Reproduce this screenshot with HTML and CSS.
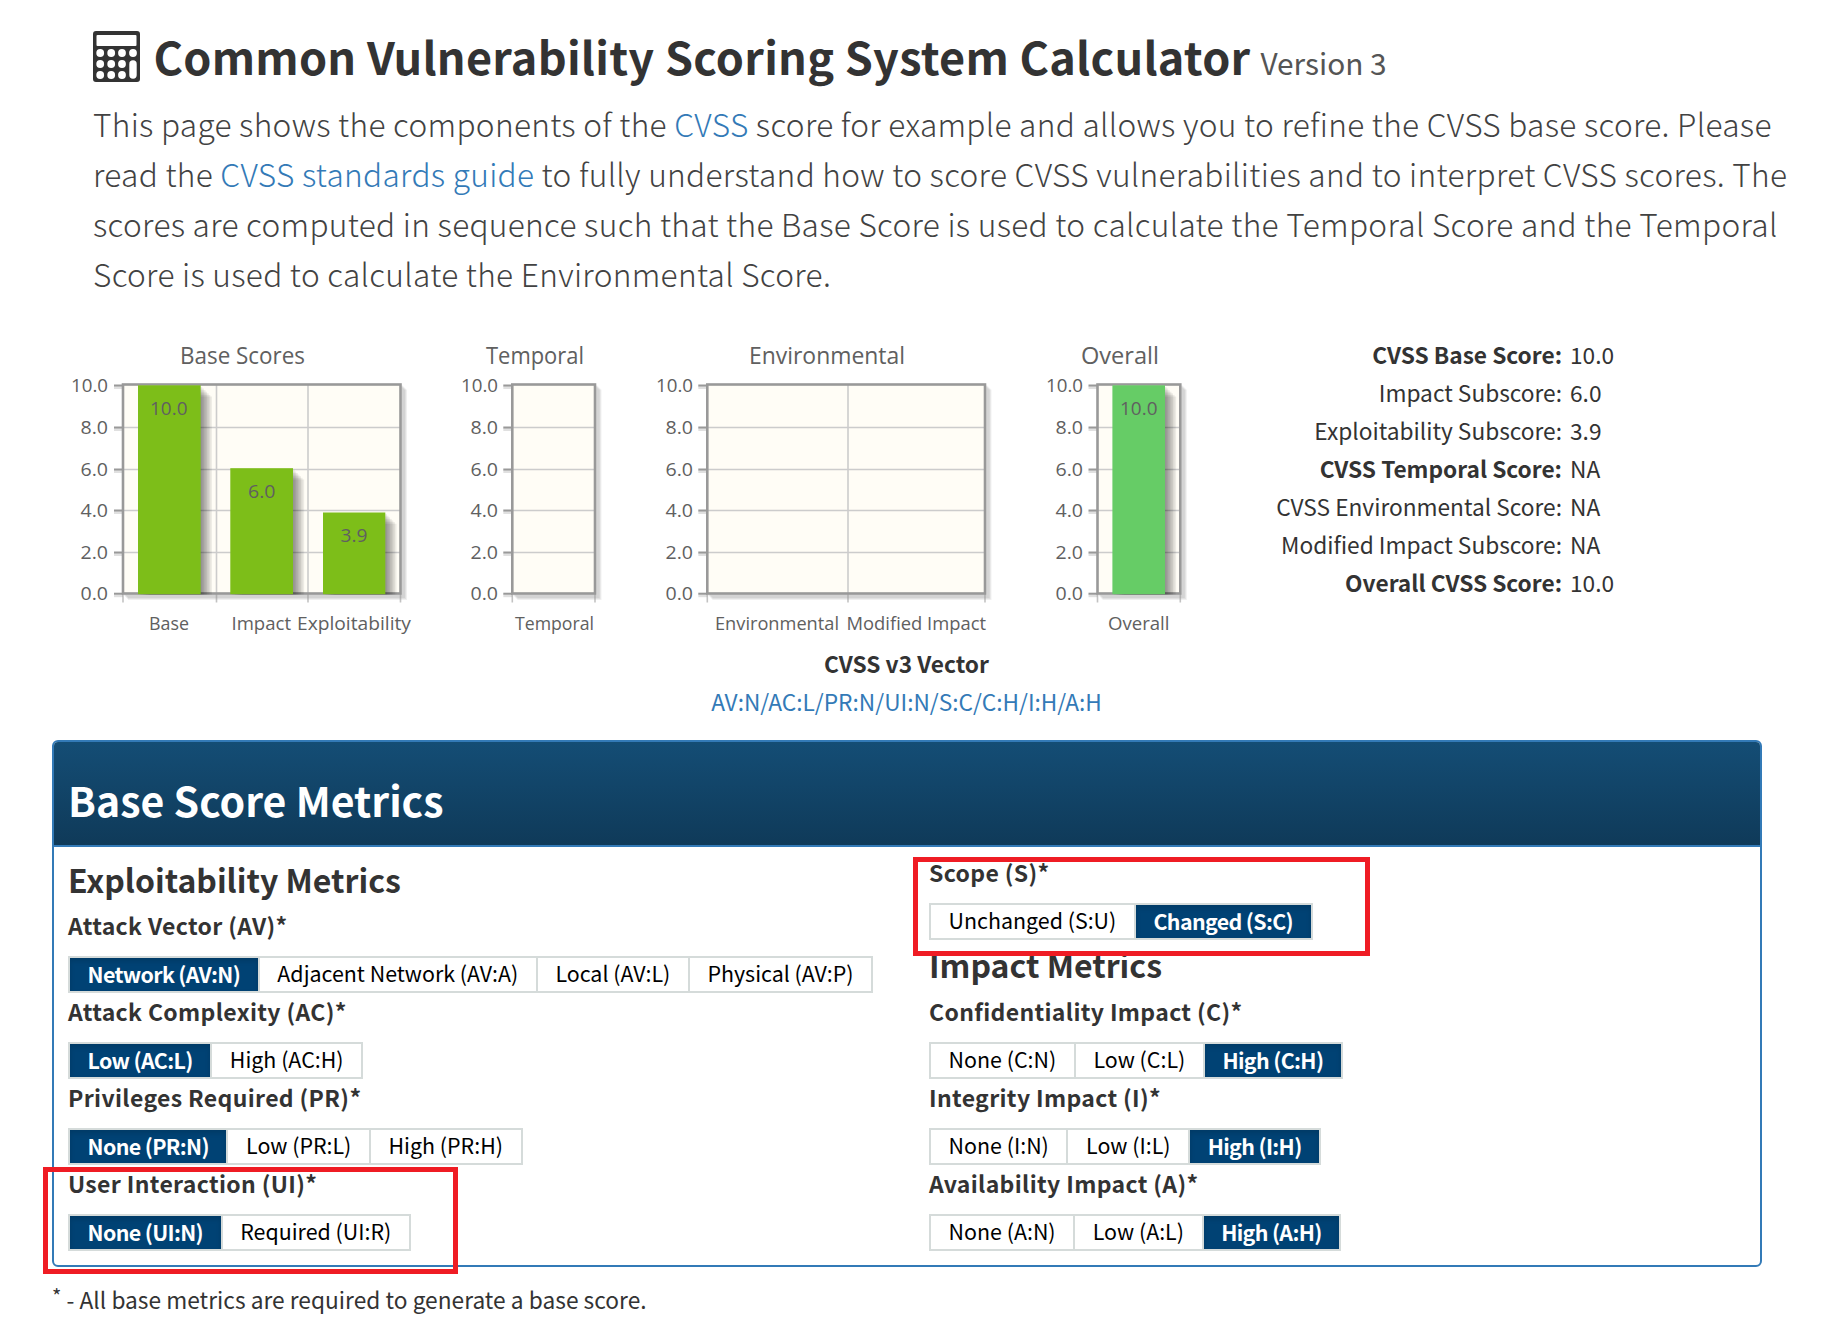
FILE: index.html
```html
<!DOCTYPE html>
<html lang="en">
<head>
<meta charset="utf-8">
<title>Common Vulnerability Scoring System Calculator</title>
<link rel="stylesheet" href="styles.css">
</head>
<body>
<header class="intro">
  <h1 class="title">
    <svg class="calc" viewBox="0 0 47 51" width="47" height="51" aria-hidden="true">
      <path fill="#333" fill-rule="evenodd" d="M3 0H44Q47 0 47 3V48Q47 51 44 51H3Q0 51 0 48V3Q0 0 3 0ZM4.500 4Q3.500 4 3.500 5V14Q3.500 15 4.500 15H42.500Q43.500 15 43.500 14V5Q43.500 4 42.500 4Z"/>
      <g fill="#fff"><circle cx="7.200" cy="22" r="3.900"/><circle cx="18.200" cy="22" r="3.900"/><circle cx="29" cy="22" r="3.900"/><circle cx="40" cy="22" r="3.900"/><circle cx="7.200" cy="33" r="3.900"/><circle cx="18.200" cy="33" r="3.900"/><circle cx="29" cy="33" r="3.900"/><circle cx="7.200" cy="44" r="3.900"/><circle cx="18.200" cy="44" r="3.900"/><circle cx="29" cy="44" r="3.900"/><rect x="36.300" y="29.200" width="7.400" height="18.600" rx="3.700"/></g>
    </svg>
    <span class="title-text">Common Vulnerability Scoring System Calculator</span>
    <small class="version">Version 3</small>
  </h1>
  <p class="lead">This page shows the components of the <a href="#">CVSS</a> score for example and allows you to refine the CVSS base score. Please<br>read the <a href="#">CVSS standards guide</a> to fully understand how to score CVSS vulnerabilities and to interpret CVSS scores. The<br>scores are computed in sequence such that the Base Score is used to calculate the Temporal Score and the Temporal<br>Score is used to calculate the Environmental Score.</p>
</header>

<section class="scores">
  <svg class="chart" id="chart-base" width="380" height="314" viewBox="50 330 380 314"></svg>
  <svg class="chart" id="chart-temporal" width="210" height="314" viewBox="430 330 210 314"></svg>
  <svg class="chart" id="chart-env" width="390" height="314" viewBox="640 330 390 314"></svg>
  <svg class="chart" id="chart-overall" width="200" height="314" viewBox="1030 330 200 314"></svg>
  <dl class="score-list">
    <dt class="strong">CVSS Base Score:</dt><dd>10.0</dd>
    <dt>Impact Subscore:</dt><dd>6.0</dd>
    <dt>Exploitability Subscore:</dt><dd>3.9</dd>
    <dt class="strong">CVSS Temporal Score:</dt><dd>NA</dd>
    <dt>CVSS Environmental Score:</dt><dd>NA</dd>
    <dt>Modified Impact Subscore:</dt><dd>NA</dd>
    <dt class="strong">Overall CVSS Score:</dt><dd>10.0</dd>
  </dl>
</section>

<div class="vector">
  <strong>CVSS v3 Vector</strong>
  <a href="#">AV:N/AC:L/PR:N/UI:N/S:C/C:H/I:H/A:H</a>
</div>

<section class="panel">
  <div class="panel-head"><h2>Base Score Metrics</h2></div>
  <div class="panel-body">
    <div class="col col-left">
      <h3>Exploitability Metrics</h3>
      <div class="metric">
        <h4>Attack Vector (AV)*</h4>
        <div class="group"><button class="on">Network (AV:N)</button><button>Adjacent Network (AV:A)</button><button>Local (AV:L)</button><button>Physical (AV:P)</button></div>
      </div>
      <div class="metric">
        <h4>Attack Complexity (AC)*</h4>
        <div class="group"><button class="on">Low (AC:L)</button><button>High (AC:H)</button></div>
      </div>
      <div class="metric">
        <h4>Privileges Required (PR)*</h4>
        <div class="group"><button class="on">None (PR:N)</button><button>Low (PR:L)</button><button>High (PR:H)</button></div>
      </div>
      <div class="metric">
        <h4>User Interaction (UI)*</h4>
        <div class="group"><button class="on">None (UI:N)</button><button>Required (UI:R)</button></div>
        <span class="mark mark-ui"></span>
      </div>
    </div>
    <div class="col col-right">
      <div class="metric">
        <h4>Scope (S)*</h4>
        <div class="group"><button>Unchanged (S:U)</button><button class="on">Changed (S:C)</button></div>
        <span class="mark mark-scope"></span>
      </div>
      <h3>Impact Metrics</h3>
      <div class="metric">
        <h4>Confidentiality Impact (C)*</h4>
        <div class="group"><button>None (C:N)</button><button>Low (C:L)</button><button class="on">High (C:H)</button></div>
      </div>
      <div class="metric">
        <h4>Integrity Impact (I)*</h4>
        <div class="group"><button>None (I:N)</button><button>Low (I:L)</button><button class="on">High (I:H)</button></div>
      </div>
      <div class="metric">
        <h4>Availability Impact (A)*</h4>
        <div class="group"><button>None (A:N)</button><button>Low (A:L)</button><button class="on">High (A:H)</button></div>
      </div>
    </div>
  </div>
</section>
<p class="footnote"><sup>*</sup> - All base metrics are required to generate a base score.</p>
<script src="charts.js"></script>
</body>
</html>
```
FILE: styles.css
```css
* { box-sizing: border-box; }
body {
  margin: 0;
  background: #fff;
  color: #333;
  font-family: "Noto Sans CJK SC", "Noto Sans", sans-serif;
  font-size: 22.7px;
  line-height: 38px;
}
h1, h2, h3, h4, p, dl, dd { margin: 0; }
a { color: #337ab7; text-decoration: none; }

.intro { padding: 25px 0 0 92px; height: 330px; white-space: nowrap; }
.title { display: flex; align-items: baseline; height: 73px; font-size: 45px; line-height: 62px; font-weight: 700; }
.title-text { letter-spacing: .25px; }
.calc { align-self: flex-start; margin: 6px 14px 0 .5px; }
.version { margin-left: 10px; font-size: 29.8px; font-weight: 400; color: #555; }
.lead { font-size: 31.6px; line-height: 50px; font-weight: 300; padding-left: 1px; letter-spacing: .31px; color: #424242; }

.scores { display: flex; height: 314px; padding-left: 50px; }
.chart { flex: none; overflow: visible; }
.chart text { font-family: "Open Sans", "Noto Sans", sans-serif; fill: #606060; font-size: 19px; }
.chart .chart-title { font-size: 23px; }
.score-list { display: grid; grid-template-columns: 332px auto; column-gap: 8px; align-content: start; grid-auto-rows: 38px; padding-top: 6px; }
.score-list dt { text-align: right; white-space: nowrap; }
.strong { font-weight: 700; }

.vector { display: flex; flex-direction: column; align-items: center; width: 1813px; height: 96px; padding-top: 1px; }

.panel { margin-left: 52px; width: 1710px; border: 2px solid #337ab7; border-radius: 6px; }
.panel-head { height: 105px; padding: 32px 0 0 14px; border-bottom: 2px solid #337ab7; border-radius: 4px 4px 0 0; background: linear-gradient(#144d75, #0f3a59); color: #fff; }
h2 { font-size: 41px; line-height: 50px; }
.panel-body { display: flex; height: 418px; padding-left: 14px; }
.col-left { width: 861px; padding-top: 12px; }
.col-right { padding-top: 7px; }
h3 { font-size: 32px; line-height: 40px; margin-bottom: 8px; }
h4 { font-size: 23px; line-height: 37px; margin-bottom: 12px; letter-spacing: .35px; white-space: nowrap; }
.metric { position: relative; height: 86px; }
.col-right h3 { margin: 4px 0 9px; }
.group { display: inline-flex; height: 37px; padding: 2px; gap: 2px; background: #d5dbda; vertical-align: top; }
button { border: 0; margin: 0; padding: 0 17.6px; height: 33px; background: #fff; color: #000; font: inherit; font-size: 21.4px; line-height: 29px; white-space: nowrap; display: flex; align-items: flex-start; }
button.on { background: #004274; color: #fff; font-weight: 700; letter-spacing: -.65px; line-height: 31px; box-shadow: inset 0 3px 5px rgba(0, 0, 0, .125); }
.mark { position: absolute; z-index: 2; border: 5px solid #ef1c24; pointer-events: none; }
.mark-ui { left: -25px; top: 2px; width: 415px; height: 107px; }
.mark-scope { left: -16px; top: 3px; width: 457px; height: 99px; }
.footnote { padding: 14px 0 0 52px; letter-spacing: .03px; }
.footnote sup { font-size: 20px; line-height: 0; vertical-align: 5px; }
```
FILE: charts.js
```javascript
const NS = "http://www.w3.org/2000/svg";
const TOP = 384.5, BOTTOM = 593.5;
const ROWS = [385.5, 427.5, 469.5, 510.5, 552.5, 593.7];

function add(parent, tag, attrs, text) {
  const el = document.createElementNS(NS, tag);
  for (const k in attrs) el.setAttribute(k, attrs[k]);
  if (text) el.textContent = text;
  parent.appendChild(el);
  return el;
}
function label(svg, text, x1, x2, y, cls) {
  add(svg, "text", { x: x1, y: y, textLength: x2 - x1, lengthAdjust: "spacingAndGlyphs", class: cls || "" }, text);
}
function chart(id, c) {
  const svg = document.getElementById(id);
  const w = c.right - c.left, h = BOTTOM - TOP;
  label(svg, c.title[0], c.title[1], c.title[2], 363.5, "chart-title");
  for (let i = 5; i >= 1; i--)
    add(svg, "path", { d: `M${c.right + i} ${TOP + i}V${BOTTOM + i}H${c.left + i}`, fill: "none", stroke: "#000", "stroke-opacity": 0.06, "stroke-width": 3 });
  ROWS.forEach((y, i) => {
    add(svg, "path", { d: `M${c.left - 9} ${y + 2}h9`, stroke: "#000", "stroke-opacity": 0.12, "stroke-width": 3 });
    add(svg, "path", { d: `M${c.left - 9} ${y}h9`, stroke: "#999", "stroke-width": 2 });
    const t = (10 - i * 2).toFixed(1);
    const len = t.length > 3 ? 37 : 27.5;
    label(svg, t, c.axis - len, c.axis, y + 6.4);
  });
  add(svg, "rect", { x: c.left, y: TOP, width: w, height: h, fill: "#fffdf6" });
  ROWS.slice(1, 5).forEach(y => add(svg, "path", { d: `M${c.left} ${y}h${w}`, stroke: "#ccc", "stroke-width": 1.6 }));
  c.grid.forEach(x => add(svg, "path", { d: `M${x} ${TOP}v${h}`, stroke: "#ccc", "stroke-width": 1.6 }));
  [c.left, ...c.grid, c.right].forEach(x => add(svg, "path", { d: `M${x} ${BOTTOM}v9`, stroke: "#999", "stroke-opacity": 0.6, "stroke-width": 1.6 }));
  add(svg, "rect", { x: c.left, y: TOP, width: w, height: h, fill: "none", stroke: "#999", "stroke-width": 2.6 });
  const clip = add(svg, "clipPath", { id: id + "-clip" });
  add(clip, "rect", { x: c.left, y: TOP, width: w + 1, height: h + 1 });
  c.bars.forEach(b => {
    const g = add(svg, "g", { "clip-path": `url(#${id}-clip)` });
    for (let i = 7; i >= 1; i--)
      add(g, "rect", { x: b.x1 + i * 1.6, y: b.top + i * 1.6, width: b.x2 - b.x1, height: 230, fill: "#000", "fill-opacity": 0.07 });
    add(svg, "rect", { x: b.x1, y: b.top, width: b.x2 - b.x1, height: 594.2 - b.top, fill: c.color });
    label(svg, b.text[0], b.text[1], b.text[2], b.text[3]);
  });
  c.names.forEach(n => label(svg, n[0], n[1], n[2], 630));
}

chart("chart-base", {
  title: ["Base Scores", 180, 305], left: 123, right: 400.5, axis: 108, grid: [216.5, 308], color: "#7dbe19",
  bars: [
    { x1: 138, x2: 200.7, top: 385.3, text: ["10.0", 150, 187.5, 414.7] },
    { x1: 230.3, x2: 293, top: 468.2, text: ["6.0", 248, 275.5, 497.7] },
    { x1: 323, x2: 385.3, top: 512.5, text: ["3.9", 340.5, 367.5, 541.7] }
  ],
  names: [["Base", 149, 189], ["Impact", 231.5, 291], ["Exploitability", 297, 411]]
});
chart("chart-temporal", {
  title: ["Temporal", 486, 584], left: 512.3, right: 595, axis: 498, grid: [], color: "#7dbe19",
  bars: [], names: [["Temporal", 515, 594]]
});
chart("chart-env", {
  title: ["Environmental", 749, 905], left: 707.3, right: 985, axis: 693, grid: [848], color: "#7dbe19",
  bars: [], names: [["Environmental", 715, 839], ["Modified Impact", 846.5, 986]]
});
chart("chart-overall", {
  title: ["Overall", 1081, 1159], left: 1097.5, right: 1180.3, axis: 1083, grid: [], color: "#66cc66",
  bars: [{ x1: 1112.4, x2: 1165, top: 385.3, text: ["10.0", 1120, 1157.5, 414.7] }],
  names: [["Overall", 1108, 1169.5]]
});
```
